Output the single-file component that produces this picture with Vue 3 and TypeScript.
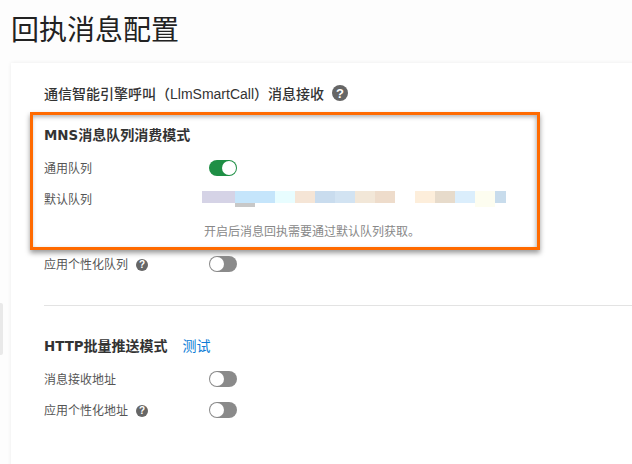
<template>
  <div class="page">
    <div class="side-handle"></div>
    <h1 class="page-title">回执消息配置</h1>
    <div class="card">
      <div class="heading">
        <span>通信智能引擎呼叫（LlmSmartCall）消息接收</span>
        <span class="help help-lg">?</span>
      </div>

      <div class="highlight">
        <div class="sub-title"><span class="latin">MNS</span>消息队列消费模式</div>
        <div class="row">
          <span class="label">通用队列</span>
          <span class="switch on"><i></i></span>
        </div>
        <div class="row">
          <span class="label">默认队列</span>
          <div class="masked">
            <span
              v-for="(seg, i) in maskedSegments"
              :key="i"
              class="seg"
              :class="{ tall: seg.tall }"
              :style="{ width: seg.w + 'px', background: seg.c }"
            ></span>
            <span class="seg-under"></span>
          </div>
        </div>
        <div class="hint">开启后消息回执需要通过默认队列获取。</div>
      </div>

      <div class="row after-box">
        <span class="label">应用个性化队列<span class="help help-sm">?</span></span>
        <span class="switch"><i></i></span>
      </div>

      <div class="divider"></div>

      <div class="sub-title http">
        <span><span class="latin">HTTP</span>批量推送模式</span>
        <a class="link">测试</a>
      </div>
      <div class="row">
        <span class="label">消息接收地址</span>
        <span class="switch"><i></i></span>
      </div>
      <div class="row">
        <span class="label">应用个性化地址<span class="help help-sm">?</span></span>
        <span class="switch"><i></i></span>
      </div>
    </div>
  </div>
</template>

<script setup lang="ts">
const maskedSegments: { w: number; c: string; tall?: boolean }[] = [
  { w: 33, c: '#d5d3e6' },
  { w: 40, c: '#c5e5fb' },
  { w: 20, c: '#e8fdff' },
  { w: 20, c: '#f5e5d6' },
  { w: 20, c: '#c9dcee' },
  { w: 20, c: '#d2e3f2' },
  { w: 20, c: '#f2e7d8' },
  { w: 20, c: '#eedccb' },
  { w: 20, c: '#ffffff' },
  { w: 20, c: '#fdeedb' },
  { w: 20, c: '#e7dbcb' },
  { w: 20, c: '#dbeefc' },
  { w: 20, c: '#fdfdf0', tall: true },
  { w: 11, c: '#c8dcec' },
];
</script>

<style>
html,
body {
  margin: 0;
  background: #fff;
  overflow: hidden;
}
</style>

<style scoped>
.page {
  position: relative;
  height: 464px;
  overflow: hidden;
  background: #fdfdfd;
  font-family: "Liberation Sans", "Noto Sans CJK SC", sans-serif;
  color: #333;
}

.side-handle {
  position: absolute;
  left: 0;
  top: 303px;
  width: 3px;
  height: 52px;
  background: #e9e9e9;
  border-radius: 0 2px 2px 0;
}

.page-title {
  margin: 0 0 12px;
  padding: 11px 0 0 11px;
  height: 40px;
  font-size: 28px;
  line-height: 40px;
  font-weight: 400;
  color: #222;
}

.card {
  width: 800px;
  height: 460px;
  margin-left: 11px;
  padding: 20px 0 0 33px;
  box-sizing: border-box;
  background: #fff;
  box-shadow: 0 0 4px rgba(0, 0, 0, 0.07);
}

.heading {
  display: flex;
  align-items: center;
  gap: 8px;
  height: 20px;
  font-size: 14px;
  font-weight: 500;
  color: #333;
}

.help {
  display: inline-flex;
  align-items: center;
  justify-content: center;
  border-radius: 50%;
  background: #666;
  color: #fff;
  font-family: "Liberation Sans", sans-serif;
  font-weight: 700;
}

.help-lg {
  width: 16px;
  height: 16px;
  font-size: 13px;
}

.help-sm {
  width: 12px;
  height: 12px;
  font-size: 10px;
  margin-left: 8px;
}

.highlight {
  width: 510px;
  height: 138px;
  margin: 9px 0 0 -14px;
  padding: 10px 0 0 11px;
  box-sizing: border-box;
  border: 3px solid #ff6a00;
  box-shadow: 0 3px 5px rgba(0, 0, 0, 0.4), inset -1px 2px 4px rgba(0, 0, 0, 0.3);
}

.sub-title {
  height: 20px;
  line-height: 20px;
  font-size: 14px;
  font-weight: 700;
  color: #333;
}

.latin {
  font-family: "DejaVu Sans", sans-serif;
  font-size: 13.4px;
}

.row {
  display: grid;
  grid-template-columns: 165px auto;
  grid-template-rows: 16px;
  align-items: center;
  justify-content: start;
  height: 16px;
  margin-top: 15px;
  line-height: 16px;
  font-size: 12px;
  color: #555;
}

.row.after-box {
  margin-top: 6px;
}

.label {
  display: inline-flex;
  align-items: center;
  align-self: start;
  padding-top: 1px;
}

.switch {
  position: relative;
  display: block;
  width: 28px;
  height: 16px;
  border-radius: 8px;
  background: #8a8a8a;
}

.switch i {
  position: absolute;
  top: 1px;
  left: 1px;
  width: 14px;
  height: 14px;
  border-radius: 50%;
  background: #fff;
}

.switch.on {
  background: #1f8f45;
}

.switch.on i {
  left: 13px;
}

.masked {
  position: relative;
  display: flex;
  align-self: start;
  align-items: flex-start;
  height: 12px;
  margin-left: -7px;
}

.seg {
  display: block;
  flex: none;
  height: 12px;
}

.seg.tall {
  height: 16px;
}

.seg-under {
  position: absolute;
  left: 33px;
  top: 12px;
  width: 20px;
  height: 4px;
  background: #c8c8c8;
}

.hint {
  height: 15px;
  margin-top: 17px;
  padding-left: 160px;
  line-height: 16px;
  font-size: 12px;
  color: #888;
}

.divider {
  width: 700px;
  height: 1px;
  margin-top: 33px;
  background: #e3e3e3;
}

.sub-title.http {
  display: flex;
  gap: 15px;
  margin-top: 30px;
}

.link {
  font-weight: 400;
  color: #0a7bd6;
}
</style>
